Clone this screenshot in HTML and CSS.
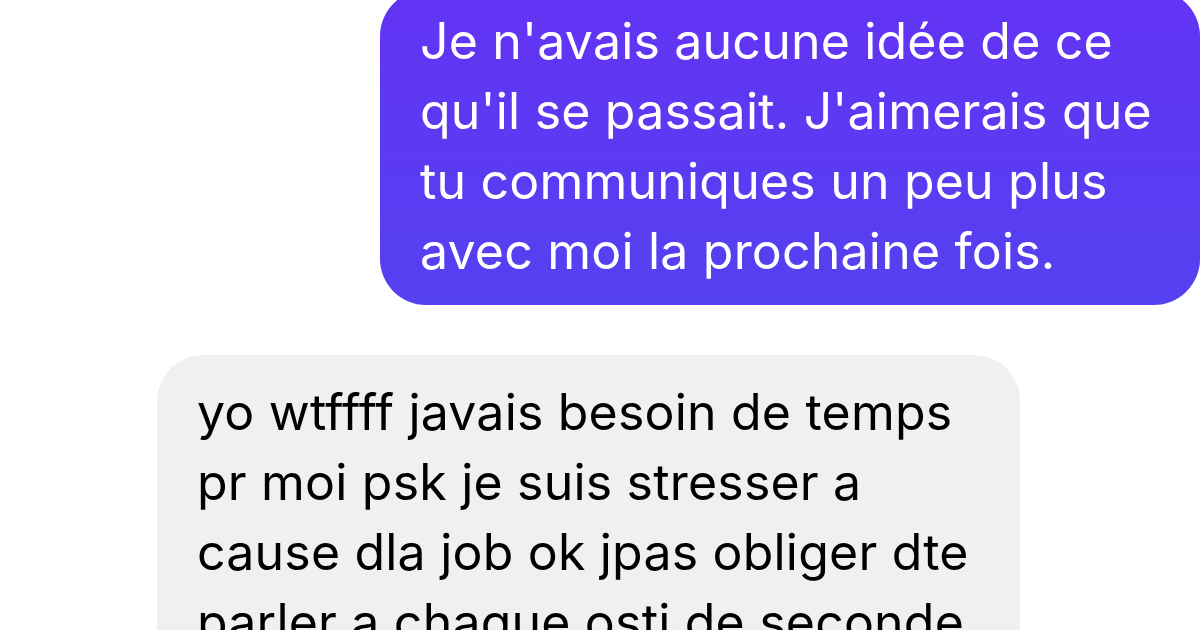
FILE: index.html
```html
<!DOCTYPE html>
<html lang="fr">
<head>
<meta charset="utf-8">
<link rel="stylesheet" href="styles.css">
</head>
<body>
<div class="chat">
  <div class="bubble sent">Je n'avais aucune idée de ce<br>qu'il se passait. J'aimerais que<br>tu communiques un peu plus<br>avec moi la prochaine fois.</div>
  <div class="bubble received">yo wtffff javais besoin de temps<br>pr moi psk je suis stresser a<br>cause dla job ok jpas obliger dte<br>parler a chaque osti de seconde</div>
</div>
</body>
</html>
```
FILE: styles.css
```css
html, body {
  margin: 0;
  padding: 0;
  background: #ffffff;
  overflow: hidden;
}
.chat {
  width: 1200px;
  height: 630px;
  display: flex;
  flex-direction: column;
  gap: 50px;
  overflow: hidden;
}
.bubble {
  font-family: "Inter", "Liberation Sans", sans-serif;
  font-size: 50px;
  line-height: 70px;
  letter-spacing: 0.2px;
  border-radius: 46px;
  box-sizing: border-box;
  flex-shrink: 0;
}
.sent {
  margin-top: -10px;
  margin-left: 380px;
  width: 820px;
  padding: 16px 40px 19px 40px;
  color: #ffffff;
  background: linear-gradient(180deg, #6333f4 0%, #5541f0 100%);
}
.received {
  margin-left: 157px;
  width: 863px;
  padding: 22px 40px 30px 40px;
  color: #000000;
  background: #f0f0f0;
}
```
